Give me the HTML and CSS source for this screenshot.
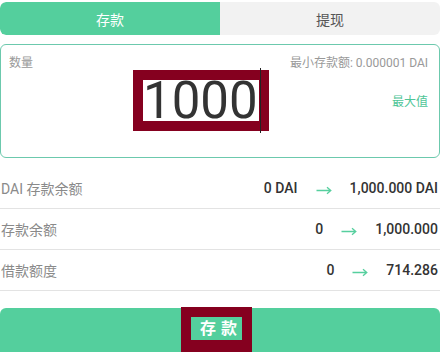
FILE: index.html
```html
<!DOCTYPE html>
<html lang="zh">
<head>
<meta charset="utf-8">
<link rel="stylesheet" href="styles.css">
</head>
<body>
<div class="page">
  <div class="tabs">
    <div class="tab active">存款</div>
    <div class="tab">提现</div>
  </div>

  <div class="input-box">
    <div class="input-top">
      <span class="label">数量</span>
      <span class="min">最小存款额: 0.000001 DAI</span>
    </div>
    <div class="amount-row">
      <div class="amount-wrap"><span class="amount">1000</span></div>
      <span class="max">最大值</span>
    </div>
  </div>

  <div class="rows">
    <div class="row">
      <span class="row-label">DAI 存款余额</span>
      <span class="row-values">
        <span class="val">0 DAI</span>
        <svg class="arrow" width="16" height="10" viewBox="0 0 16 10"><path d="M0.5 5.5H15M11 2.2l3.8 3.3-3.8 3.3" fill="none" stroke="#56cf9e" stroke-width="1.3"/></svg>
        <span class="val">1,000.000 DAI</span>
      </span>
    </div>
    <div class="row">
      <span class="row-label">存款余额</span>
      <span class="row-values">
        <span class="val">0</span>
        <svg class="arrow" width="16" height="10" viewBox="0 0 16 10"><path d="M0.5 5.5H15M11 2.2l3.8 3.3-3.8 3.3" fill="none" stroke="#56cf9e" stroke-width="1.3"/></svg>
        <span class="val">1,000.000</span>
      </span>
    </div>
    <div class="row">
      <span class="row-label">借款额度</span>
      <span class="row-values">
        <span class="val">0</span>
        <svg class="arrow" width="16" height="10" viewBox="0 0 16 10"><path d="M0.5 5.5H15M11 2.2l3.8 3.3-3.8 3.3" fill="none" stroke="#56cf9e" stroke-width="1.3"/></svg>
        <span class="val">714.286</span>
      </span>
    </div>
  </div>

  <div class="submit">
    <span class="submit-text">存款</span>
  </div>
</div>
</body>
</html>
```

FILE: styles.css
```css
html, body {
  margin: 0;
  padding: 0;
  background: #ffffff;
  overflow: hidden;
}
body {
  width: 440px;
  height: 352px;
  font-family: "Roboto", "Noto Sans CJK SC", sans-serif;
}
.page {
  padding-top: 2px;
}
.tabs {
  display: flex;
  height: 33px;
  background: #f2f2f2;
  border-radius: 6px;
  overflow: hidden;
}
.tab {
  flex: 1;
  display: flex;
  align-items: center;
  justify-content: center;
  font-size: 14px;
  color: #555555;
}
.tab.active {
  background: #54cf9d;
  color: #ffffff;
  border-radius: 6px 0 0 6px;
}
.input-box {
  margin-top: 9px;
  height: 114px;
  box-sizing: border-box;
  border: 1px solid #6cc9ad;
  border-radius: 6px;
  padding: 8px 11px 0 8px;
}
.input-top {
  display: flex;
  justify-content: space-between;
  align-items: center;
  height: 16px;
  font-size: 12px;
  color: #999999;
}
.amount-row {
  display: flex;
  align-items: center;
  margin-top: 1px;
}
.amount-wrap {
  flex: 1;
  display: flex;
  justify-content: center;
  padding-left: 5px;
}
.amount {
  position: relative;
  display: inline-block;
  border: 10px solid #85001f;
  background: #ffffff;
  height: 41px;
  line-height: 41px;
  font-size: 51px;
  color: #333333;
  width: 116px;
  white-space: nowrap;
}
.amount::after {
  content: "";
  position: absolute;
  left: 117px;
  top: -12px;
  width: 1px;
  height: 65px;
  background: #222222;
}
.max {
  font-size: 12px;
  color: #4fc597;
  margin-left: 4px;
}
.rows {
  margin-top: 10px;
}
.row {
  display: flex;
  justify-content: space-between;
  align-items: center;
  height: 40px;
  border-bottom: 1px solid #e3e3e3;
  padding-left: 1px;
  padding-right: 2px;
}
.row-label {
  font-size: 14px;
  color: #8a8a8a;
}
.row-values {
  display: flex;
  align-items: center;
}
.val {
  font-size: 14px;
  font-weight: 500;
  color: #333333;
}
.arrow {
  margin: 3px 18px 0 18px;
  display: block;
}
.submit {
  margin-top: 17px;
  height: 50px;
  background: #54cf9d;
  border-radius: 6px;
  display: flex;
  justify-content: center;
  align-items: flex-start;
}
.submit-text {
  margin-top: -1px;
  margin-right: 7px;
  border: 10px solid #85001f;
  border-bottom-width: 14px;
  height: 23px;
  line-height: 23px;
  padding-left: 9px;
  font-size: 16px;
  font-weight: 700;
  letter-spacing: 5px;
  color: #ffffff;
  background: #54cf9d;
}
```
